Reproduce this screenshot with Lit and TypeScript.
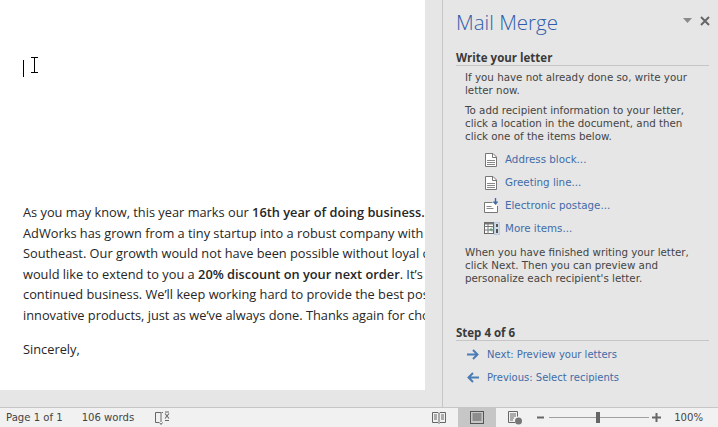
import { LitElement, html, css } from "lit";
import { customElement } from "lit/decorators.js";

@customElement("app-root")
export class AppRoot extends LitElement {
  static styles = css`
    :host { display: flex; flex-direction: column; width: 718px; height: 427px; overflow: hidden; background: #e6e6e6; font-family: "Open Sans", sans-serif; }
    .main { flex: 1; display: flex; min-height: 0; }
    .canvas { width: 442px; flex: none; }
    .page { width: 425px; height: 390px; background: #fff; overflow: hidden; position: relative; box-sizing: border-box; padding: 202px 0 0 23px; }
    .caret { position: absolute; left: 23px; top: 60px; width: 1px; height: 17px; background: #000; }
    .ibeam { position: absolute; left: 30px; top: 57px; }
    .page p { margin: 0; white-space: nowrap; font-size: 12.8px; line-height: 20.5px; color: #262626; }
    .page b { font-weight: 600; }
    .page p.close { margin-top: 14px; }
    .pane { flex: 1; border-left: 1px solid #c6c6c6; box-sizing: border-box; padding: 0 9px 0 13px; display: flex; flex-direction: column; min-width: 0; }
    .head { display: flex; align-items: center; height: 46px; }
    h1 { flex: 1; margin: -2px 0 0; font: 300 20.5px/28px "Open Sans", sans-serif; color: #2f5cab; }
    .head svg { display: block; }
    .tri { margin-right: 8px; margin-bottom: 5px; }
    .x { margin-right: -1px; margin-bottom: 5px; }
    h2 { margin: 0; font: 700 11.5px/16px "Open Sans", sans-serif; color: #3a3a3a; border-bottom: 1px solid #c6c6c6; height: 20px; box-sizing: border-box; padding-top: 4px; }
    .body { padding-left: 9px; font: 10.3px/13px "DejaVu Sans", sans-serif; color: #444; }
    .body p { margin: 0; white-space: nowrap; }
    .first { padding-top: 5px; }
    .gap { margin-top: 7px !important; }
    .links { padding-left: 19px; margin-top: 5px; margin-bottom: 6px; }
    .link { display: flex; align-items: center; height: 23px; gap: 5px; color: #3f6ca8; font: 10.3px/13px "DejaVu Sans", sans-serif; white-space: nowrap; }
    .ic { width: 16px; display: flex; justify-content: center; flex: none; }
    .ic.left { justify-content: flex-start; padding-left: 1px; width: 15px; }
    .spacer { flex: 1; }
    .nav { padding-left: 9px; padding-top: 2px; height: 66px; box-sizing: border-box; flex: none; }
    .nav .link { gap: 6px; font-size: 10px; }
    .status { height: 20px; box-sizing: border-box; flex: none; background: #f1f1f1; border-top: 1px solid #c6c6c6; display: flex; align-items: center; font: 10.1px/14px "DejaVu Sans", sans-serif; color: #444; }
    .pg { margin-left: 6px; }
    .wd { margin-left: 19px; }
    .proof { margin-left: 21px; display: block; }
    .views { margin-left: auto; display: flex; align-items: stretch; height: 100%; }
    .v { width: 38px; display: flex; align-items: center; justify-content: center; }
    .v.on { background: #c6c6c6; }
    .zoom { display: flex; align-items: center; margin-left: 3px; }
    .track { width: 100px; height: 1px; background: #a0a0a0; margin: 0 3px 0 5px; position: relative; }
    .thumb { position: absolute; left: 47px; top: -5px; width: 4px; height: 11px; background: #666; }
    .pct { width: 42px; text-align: right; margin-right: 15px; }
  `;

  private doc(kind: string) {
    return html`<svg width="12" height="14" viewBox="0 0 12 14" fill="none">
      <path d="M.5.5h7.5l3.5 3.5v9.5H.5z" fill="#fff" stroke="#777"/><path d="M7.5.5v4h4" stroke="#777"/>${kind === "a"
        ? html`<path d="M2 3h4v2H2z" fill="#3f6ca8"/>`
        : html`<path d="M2 5h5v2H2z" fill="#3f6ca8"/>`}
      <path d="M2 7.5h8M2 9.5h8M2 11.5h8" stroke="#888"/>
    </svg>`;
  }

  render() {
    return html`
      <div class="main">
        <div class="canvas">
          <div class="page">
            <div class="caret"></div>
            <svg class="ibeam" width="9" height="17" viewBox="0 0 9 17" fill="none" stroke="#000"><path d="M1 .5h7M1 15.5h7M4.5 1v14"/></svg>
            <p>As you may know, this year marks our <b>16th year of doing business.</b> Starting out in 2001,</p>
            <p>AdWorks has grown from a tiny startup into a robust company with clients all over the</p>
            <p>Southeast. Our growth would not have been possible without loyal customers like you. We</p>
            <p>would like to extend to you a <b>20% discount on your next order</b>. It’s our way of saying thanks for your</p>
            <p>continued business. We’ll keep working hard to provide the best possible service and</p>
            <p>innovative products, just as we’ve always done. Thanks again for choosing us.</p>
            <p class="close">Sincerely,</p>
          </div>
        </div>
        <div class="pane">
          <div class="head">
            <h1>Mail Merge</h1>
            <svg class="tri" width="9" height="5" viewBox="0 0 9 5"><path d="M0 0h9L4.5 5z" fill="#8a8a8a"/></svg>
            <svg class="x" width="10" height="10" viewBox="0 0 10 10" stroke="#666" stroke-width="2"><path d="M1 1l8 8M9 1l-8 8"/></svg>
          </div>
          <h2>Write your letter</h2>
          <div class="body">
            <p class="first">If you have not already done so, write your</p>
            <p>letter now.</p>
            <p class="gap">To add recipient information to your letter,</p>
            <p>click a location in the document, and then</p>
            <p>click one of the items below.</p>
            <div class="links">
              <div class="link"><span class="ic left">${this.doc("a")}</span>Address block...</div>
              <div class="link"><span class="ic left">${this.doc("b")}</span>Greeting line...</div>
              <div class="link"><span class="ic"><svg width="16" height="16" viewBox="0 0 16 16" fill="none"><path d="M8.5 4.5H.5v10h13V8" fill="#fff" stroke="#777"/><path d="M2.5 8.5h5M2.5 10.5h7" stroke="#888"/><path d="M11.5 0v6M9.5 3.5l2 2.5 2-2.5" stroke="#3f6ca8" stroke-width="1.4"/></svg></span>Electronic postage...</div>
              <div class="link"><span class="ic"><svg width="16" height="13" viewBox="0 0 16 13" fill="none"><rect x=".5" y=".5" width="9" height="11" fill="#fff" stroke="#666"/><path d="M.5 4.5h9M.5 8h9M4 1v11" stroke="#777"/><path d="M.5.5h9v2h-9z" fill="#777"/><path d="M6 7.5h4M8 5.5l-2 2 2 2" stroke="#5a9a78"/><rect x="10.5" y=".5" width="5" height="12" fill="#cfdbe8" stroke="#bcd"/><path d="M12 2h2v3h-2zM12 7h2v4h-2z" fill="#555"/></svg></span>More items...</div>
            </div>
            <p>When you have finished writing your letter,</p>
            <p>click Next. Then you can preview and</p>
            <p>personalize each recipient's letter.</p>
          </div>
          <div class="spacer"></div>
          <h2>Step 4 of 6</h2>
          <div class="nav">
            <div class="link"><span class="ic"><svg width="12" height="11" viewBox="0 0 12 11" fill="none" stroke="#4a7cb5" stroke-width="2"><path d="M0 5.5h10M6 1l4.5 4.5L6 10"/></svg></span>Next: Preview your letters</div>
            <div class="link"><span class="ic"><svg width="12" height="11" viewBox="0 0 12 11" fill="none" stroke="#4a7cb5" stroke-width="2"><path d="M12 5.5H2M6 1L1.5 5.5 6 10"/></svg></span>Previous: Select recipients</div>
          </div>
        </div>
      </div>
      <div class="status">
        <span class="pg">Page 1 of 1</span>
        <span class="wd">106 words</span>
        <svg class="proof" width="16" height="14" viewBox="0 0 16 14" fill="none" stroke="#666"><path d="M6 1.5H.5v10H4M7 1.5h1M6 1v10M4.5 11.5l1.5 2 1.5-2"/><path d="M10 2.5l4 5M14 2.5l-4 5M10 1h4M10 9.5h4" stroke-width="1.1"/></svg>
        <div class="views">
          <div class="v"><svg width="14" height="14" viewBox="0 0 14 14" fill="none" stroke="#666"><path d="M.5 1.5h5.5l1 1 1-1h5.5v10H8l-1 1-1-1H.5zM7 2.5v9M2 4h3M2 6h3M2 8h3M9 4h3M9 6h3M9 8h3"/></svg></div>
          <div class="v on"><svg width="14" height="13" viewBox="0 0 14 13" fill="none" stroke="#555"><rect x=".5" y=".5" width="13" height="12"/><path d="M2.5 3h9M2.5 5h9M2.5 7h9M2.5 9h9" /></svg></div>
          <div class="v"><svg width="15" height="14" viewBox="0 0 15 14" fill="none" stroke="#666"><path d="M7 11.5H.5V.5h9v5M2 3h6M2 5h6M2 7h4M2 9h3"/><circle cx="10.5" cy="10" r="3.5" fill="#777" stroke="none"/></svg></div>
        </div>
        <div class="zoom">
          <svg width="7" height="7" viewBox="0 0 7 7"><path d="M0 2.5h7v2H0z" fill="#666"/></svg>
          <div class="track"><div class="thumb"></div></div>
          <svg width="9" height="9" viewBox="0 0 9 9" fill="#666"><path d="M0 3.5h9v2H0zM3.5 0h2v9h-2z"/></svg>
          <span class="pct">100%</span>
        </div>
      </div>
    `;
  }
}
